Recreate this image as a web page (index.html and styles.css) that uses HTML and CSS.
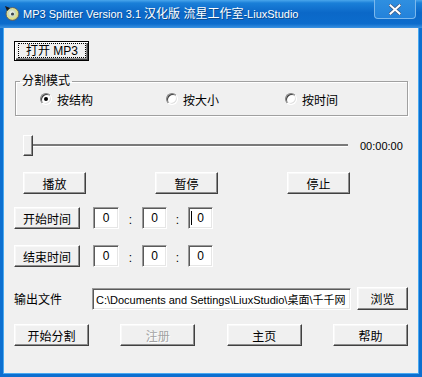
FILE: index.html
```html
<!DOCTYPE html>
<html lang="zh-CN">
<head>
  <meta charset="UTF-8" />
  <title>MP3 Splitter</title>
  <link rel="stylesheet" href="styles.css">
</head>
<body>
  <div class="window">
    <div class="titlebar">
      <svg class="app-icon" width="16" height="16" viewBox="0 0 16 16">
        <defs>
          <radialGradient id="disc" cx="0.45" cy="0.45" r="0.6">
            <stop offset="0" stop-color="#ffffff" />
            <stop offset="0.45" stop-color="#c9d8c0" />
            <stop offset="0.7" stop-color="#e5e07a" />
            <stop offset="1" stop-color="#7c8a9a" />
          </radialGradient>
        </defs>
        <circle cx="8.5" cy="9" r="6.5" fill="url(#disc)" stroke="#55606c" stroke-width="1" />
        <circle cx="8.5" cy="9" r="1.6" fill="#3a4450" />
        <path d="M1 1 L6 3 L3 6 Z" fill="#1a1a1a" />
      </svg>
      <span class="title"><span class="lat">MP3 Splitter Version 3.1 </span>汉化版 流星工作室<span class="lat">-LiuxStudio</span></span>
      <div class="close">
        <svg width="12" height="11" viewBox="0 0 12 11">
          <path d="M1.5 1.5 L10.5 9.5 M10.5 1.5 L1.5 9.5" stroke="#3c5a86" stroke-width="3.6" stroke-linecap="square" />
          <path d="M1.5 1.5 L10.5 9.5 M10.5 1.5 L1.5 9.5" stroke="#ffffff" stroke-width="2" stroke-linecap="square" />
        </svg>
      </div>
    </div>

    <div class="client">
      <div class="row-open">
        <button class="btn btn-default"><span class="focus">打开 MP3</span></button>
      </div>

      <fieldset class="mode">
        <legend>分割模式</legend>
        <div class="radios">
          <label class="radio radio-1"><span class="dot checked"></span>按结构</label>
          <label class="radio radio-2"><span class="dot"></span>按大小</label>
          <label class="radio radio-3"><span class="dot"></span>按时间</label>
        </div>
      </fieldset>

      <div class="slider-row">
        <div class="track">
          <span class="thumb"></span>
          <span class="line"></span>
        </div>
        <span class="time">00:00:00</span>
      </div>

      <div class="play-row">
        <button class="btn btn-play">播放</button>
        <button class="btn btn-play">暂停</button>
        <button class="btn btn-play">停止</button>
      </div>

      <div class="time-row first">
        <button class="btn btn-time">开始时间</button>
        <div class="edit edit-1">0</div>
        <span class="colon c1">:</span>
        <div class="edit edit-2">0</div>
        <span class="colon c2">:</span>
        <div class="edit edit-3"><span class="caret"></span>0</div>
      </div>

      <div class="time-row second">
        <button class="btn btn-time">结束时间</button>
        <div class="edit edit-1">0</div>
        <span class="colon c1">:</span>
        <div class="edit edit-2">0</div>
        <span class="colon c2">:</span>
        <div class="edit edit-3">0</div>
      </div>

      <div class="output-row">
        <span class="label">输出文件</span>
        <div class="edit edit-path">C:\Documents and Settings\LiuxStudio\桌面\千千网</div>
        <button class="btn btn-browse">浏览</button>
      </div>

      <div class="bottom-row">
        <button class="btn btn-wide">开始分割</button>
        <button class="btn btn-wide disabled">注册</button>
        <button class="btn btn-wide">主页</button>
        <button class="btn btn-wide">帮助</button>
      </div>
    </div>
  </div>
</body>
</html>
```

FILE: styles.css
```css
body {
  margin: 0;
  font-family: "Liberation Sans", "Noto Sans CJK SC", sans-serif;
  font-size: 12px;
  color: #000;
  background: #f0f0f0;
}

.window {
  width: 422px;
  height: 377px;
  display: flex;
  flex-direction: column;
  overflow: hidden;
}

/* Title bar */
.titlebar {
  height: 28px;
  flex: none;
  display: flex;
  align-items: flex-start;
  background: linear-gradient(#4aa6ec 0, #1a7fd8 3px, #0b68c8 45%, #0c6ccc 85%, #3a92e2 100%);
  color: white;
}

.app-icon {
  margin: 5px 0 0 4px;
}

.title {
  margin: 6px 0 0 3px;
  font-size: 12px;
  line-height: 16px;
  text-shadow: 1px 1px 0 #0a4a8c;
  white-space: nowrap;
}

.title .lat {
  font-size: 11px;
}

.close {
  margin-left: auto;
  margin-right: 6px;
  width: 40px;
  height: 18px;
  border: 1px solid #7cb8ec;
  border-top: none;
  border-radius: 0 0 4px 4px;
  background: linear-gradient(#2f8fe0, #2382db);
  display: flex;
  align-items: center;
  justify-content: center;
}

/* Client area */
.client {
  flex: 1;
  border: 3px solid #0c6fd0;
  border-top: none;
  box-shadow: inset 1px 0 #49a9f0, inset -1px 0 #49a9f0, inset 0 -1px #49a9f0;
  background: #f0f0f0;
  padding: 13px 11px 0 11px;
}

/* Buttons */
.btn {
  font-family: "Liberation Sans", "Noto Sans CJK SC", sans-serif;
  font-size: 12px;
  background: #f0f0f0;
  color: #000;
  border: 1px solid;
  border-color: #ffffff #404040 #404040 #ffffff;
  box-shadow: inset -1px -1px #8e8e8e, inset 1px 1px #f8f8f8;
  padding: 0;
  margin: 0;
  height: 22px;
  display: flex;
  align-items: center;
  justify-content: center;
}

.btn-default {
  width: 75px;
  height: 20px;
  border: 1px solid #000;
  box-shadow: inset 1px 1px #fff, inset -1px -1px #404040, inset -2px -2px #8e8e8e;
  padding: 1px 2px 2px 3px;
}

.btn-default .focus {
  width: 100%;
  height: 100%;
  line-height: 12px;
  border: 1px dotted #000;
  box-sizing: border-box;
  display: flex;
  align-items: center;
  justify-content: center;
}

.btn-play {
  width: 63px;
}

.btn-time {
  width: 66px;
}

.btn-browse {
  width: 51px;
  height: 23px;
  margin-left: 6px;
}

.btn-wide {
  width: 75px;
}

.btn.disabled {
  color: #a3a3a3;
  text-shadow: 1px 1px 0 #fff;
}

/* Group box */
.mode {
  margin: 13px 0 0 1px;
  width: 393px;
  box-sizing: border-box;
  padding: 4px 0 9px 0;
  border: 1px solid #a0a0a0;
  box-shadow: inset 1px 1px #fff, 1px 1px #fff;
}

.mode legend {
  margin-left: 4px;
  padding: 0 2px;
  line-height: 14px;
}

.radios {
  display: flex;
  align-items: center;
  height: 14px;
  padding-left: 24px;
}

.radio {
  display: flex;
  align-items: center;
  gap: 5px;
}

.radio-1 {
  width: 126px;
}

.radio-2 {
  width: 119px;
}

.dot {
  width: 12px;
  height: 12px;
  box-sizing: border-box;
  border-radius: 50%;
  background: #fff;
  border: 1px solid;
  border-color: #808080 #ffffff #ffffff #808080;
  box-shadow: inset 1px 1px #404040, inset -1px -1px #e0e0e0;
  display: flex;
  align-items: center;
  justify-content: center;
}

.dot.checked::after {
  content: "";
  width: 4px;
  height: 4px;
  border-radius: 50%;
  background: #000;
}

/* Slider */
.slider-row {
  margin-top: 19px;
  height: 21px;
  display: flex;
  align-items: center;
}

.track {
  margin-left: 9px;
  width: 325px;
  height: 21px;
  display: flex;
  align-items: center;
}

.thumb {
  width: 10px;
  height: 21px;
  box-sizing: border-box;
  background: #f0f0f0;
  border: 1px solid;
  border-color: #ffffff #404040 #404040 #ffffff;
  box-shadow: inset -1px -1px #8e8e8e;
}

.line {
  flex: 1;
  height: 2px;
  background: #7a7a7a;
  border-bottom: 1px solid #fff;
}

.time {
  margin-left: 12px;
  font-size: 11px;
}

.play-row {
  margin: 16px 0 0 9px;
  display: flex;
  gap: 69px;
}

/* Time rows */
.time-row {
  display: flex;
  align-items: center;
  height: 22px;
}

.time-row.first {
  margin-top: 13px;
}

.time-row.second {
  margin-top: 16px;
}

.edit {
  height: 22px;
  box-sizing: border-box;
  background: #fff;
  border: 1px solid;
  border-color: #9a9a9a #ffffff #ffffff #9a9a9a;
  box-shadow: inset 1px 1px #5a5a5a, inset -1px -1px #e6e6e6;
  display: flex;
  align-items: center;
  justify-content: center;
  position: relative;
}

.edit-1 {
  width: 26px;
  margin-left: 13px;
}

.edit-2,
.edit-3 {
  width: 25px;
}

.colon {
  text-align: center;
  padding-top: 3px;
}

.c1 {
  width: 23px;
}

.c2 {
  width: 21px;
}

.caret {
  position: absolute;
  left: 2px;
  top: 3px;
  width: 1px;
  height: 14px;
  background: #000;
}

/* Output */
.output-row {
  margin-top: 20px;
  display: flex;
  align-items: center;
  height: 23px;
}

.label {
  width: 78px;
}

.edit-path {
  width: 259px;
  justify-content: flex-start;
  padding-left: 3px;
  font-size: 11px;
  white-space: nowrap;
  overflow: hidden;
}

.bottom-row {
  margin-top: 14px;
  display: flex;
  justify-content: space-between;
}
```
